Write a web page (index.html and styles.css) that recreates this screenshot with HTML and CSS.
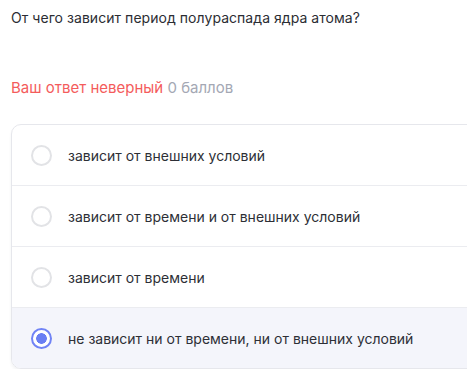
FILE: index.html
```html
<!DOCTYPE html>
<html lang="ru">
<head>
<meta charset="utf-8">
<link rel="stylesheet" href="styles.css">
</head>
<body>
<div class="page">
  <p class="question">От чего зависит период полураспада ядра атома?</p>
  <p class="result"><span class="wrong">Ваш ответ неверный</span> <span class="points">0 баллов</span></p>
  <div class="card">
    <div class="option"><span class="radio"></span><span class="label">зависит от внешних условий</span></div>
    <div class="option"><span class="radio"></span><span class="label">зависит от времени и от внешних условий</span></div>
    <div class="option"><span class="radio"></span><span class="label">зависит от времени</span></div>
    <div class="option selected"><span class="radio"></span><span class="label">не зависит ни от времени, ни от внешних условий</span></div>
  </div>
</div>
</body>
</html>
```
FILE: styles.css
```css
html, body {
  margin: 0;
  padding: 0;
  background: #fff;
}
body {
  font-family: Inter, "Noto Sans", sans-serif;
  color: #2b2d33;
  overflow: hidden;
}
.page {
  padding: 9px 0 0 11px;
}
.question {
  margin: 0;
  font-size: 14px;
  line-height: 18px;
  letter-spacing: 0.05px;
}
.result {
  margin: 51px 0 0;
  font-size: 15px;
  line-height: 20px;
}
.wrong { color: #f45c5c; }
.points { color: #a4a8b4; }
.card {
  margin-top: 26px;
  margin-right: -20px;
  border: 1px solid #e6e7ec;
  border-radius: 10px;
  overflow: hidden;
  box-shadow: 0 2px 3px rgba(40, 45, 70, 0.06);
}
.option {
  display: flex;
  align-items: center;
  gap: 16px;
  height: 60px;
  padding-left: 19px;
  border-top: 1px solid #ebecf0;
  font-size: 14px;
}
.option:first-child { border-top: none; }
.option.selected { background: #f4f5fb; }
.radio {
  width: 17px;
  height: 17px;
  border: 2px solid #e2e3e6;
  border-radius: 50%;
  background: #fff;
  flex: none;
}
.selected .radio {
  border-color: #7083f5;
  background: radial-gradient(circle, #6a7ff3 0 5px, #fff 5.6px);
}
.label { color: #2d2f36; }
```
